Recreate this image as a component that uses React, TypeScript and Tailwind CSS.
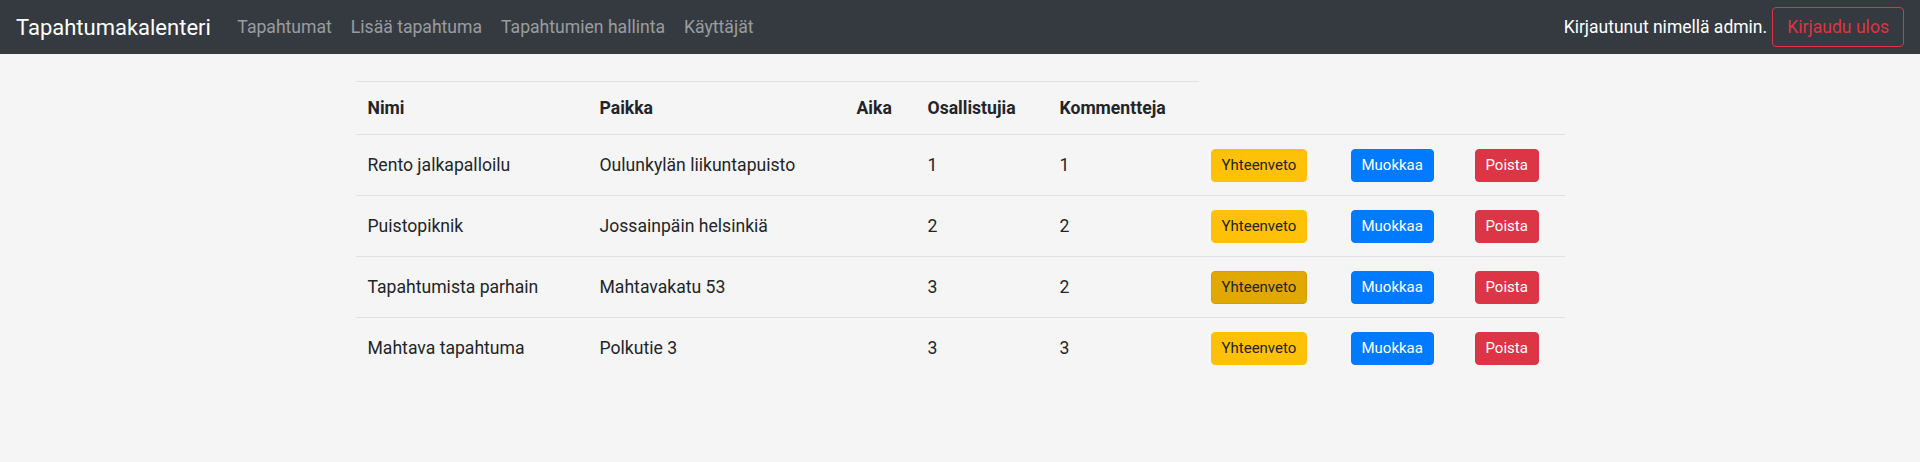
import React from "react";

const rows = [
  { nimi: "Rento jalkapalloilu", paikka: "Oulunkylän liikuntapuisto", aika: "", os: "1", kom: "1", active: false },
  { nimi: "Puistopiknik", paikka: "Jossainpäin helsinkiä", aika: "", os: "2", kom: "2", active: false },
  { nimi: "Tapahtumista parhain", paikka: "Mahtavakatu 53", aika: "", os: "3", kom: "2", active: true },
  { nimi: "Mahtava tapahtuma", paikka: "Polkutie 3", aika: "", os: "3", kom: "3", active: false },
];

const grid =
  "grid grid-cols-[232px_257px_71px_132px_151px_140px_124px_102px]";

export default function App() {
  return (
    <div
      className="min-h-screen bg-[#f5f5f5] text-[#212529]"
      style={{ fontFamily: "Roboto, 'Noto Sans', sans-serif" }}
    >
      <nav className="flex h-[54px] items-center bg-[#343a40] px-4">
        <span className="mr-[17px] text-[22px] text-white">Tapahtumakalenteri</span>
        <div className="flex items-center">
          {["Tapahtumat", "Lisää tapahtuma", "Tapahtumien hallinta", "Käyttäjät"].map((l) => (
            <a key={l} className="px-[9.5px] text-[17.6px] text-[rgba(255,255,255,0.5)]">
              {l}
            </a>
          ))}
        </div>
        <div className="ml-auto flex items-center">
          <span className="text-[17.5px] text-white">Kirjautunut nimellä admin.</span>
          <button className="ml-[5px] h-[40px] rounded border border-[#dc3545] px-[14px] text-[17.6px] text-[#dc3545]">
            Kirjaudu ulos
          </button>
        </div>
      </nav>

      <div className="mx-auto mt-[27px] w-[1209px]">
        <div className={`${grid} h-[53px] items-stretch text-[17.6px] font-bold`}>
          {["Nimi", "Paikka", "Aika", "Osallistujia", "Kommentteja"].map((h) => (
            <div key={h} className="flex items-center border-t border-[#dee2e6] px-3">
              {h}
            </div>
          ))}
        </div>
        {rows.map((r, i) => (
          <div
            key={i}
            className={`${grid} h-[61px] items-center border-t border-[#dee2e6] text-[17.6px]`}
          >
            <div className="px-3">{r.nimi}</div>
            <div className="px-3">{r.paikka}</div>
            <div className="px-3">{r.aika}</div>
            <div className="px-3">{r.os}</div>
            <div className="px-3">{r.kom}</div>
            <div className="pl-3">
              <button
                className={`h-[33px] rounded border px-[10px] text-[15px] text-[#212529] ${
                  r.active ? "border-[#d39e00] bg-[#e0a800]" : "border-[#ffc107] bg-[#ffc107]"
                }`}
              >
                Yhteenveto
              </button>
            </div>
            <div className="pl-3">
              <button className="h-[33px] rounded border border-[#007bff] bg-[#007bff] px-[10px] text-[15px] text-white">
                Muokkaa
              </button>
            </div>
            <div className="pl-3">
              <button className="h-[33px] rounded border border-[#dc3545] bg-[#dc3545] px-[10px] text-[15px] text-white">
                Poista
              </button>
            </div>
          </div>
        ))}
      </div>
    </div>
  );
}
